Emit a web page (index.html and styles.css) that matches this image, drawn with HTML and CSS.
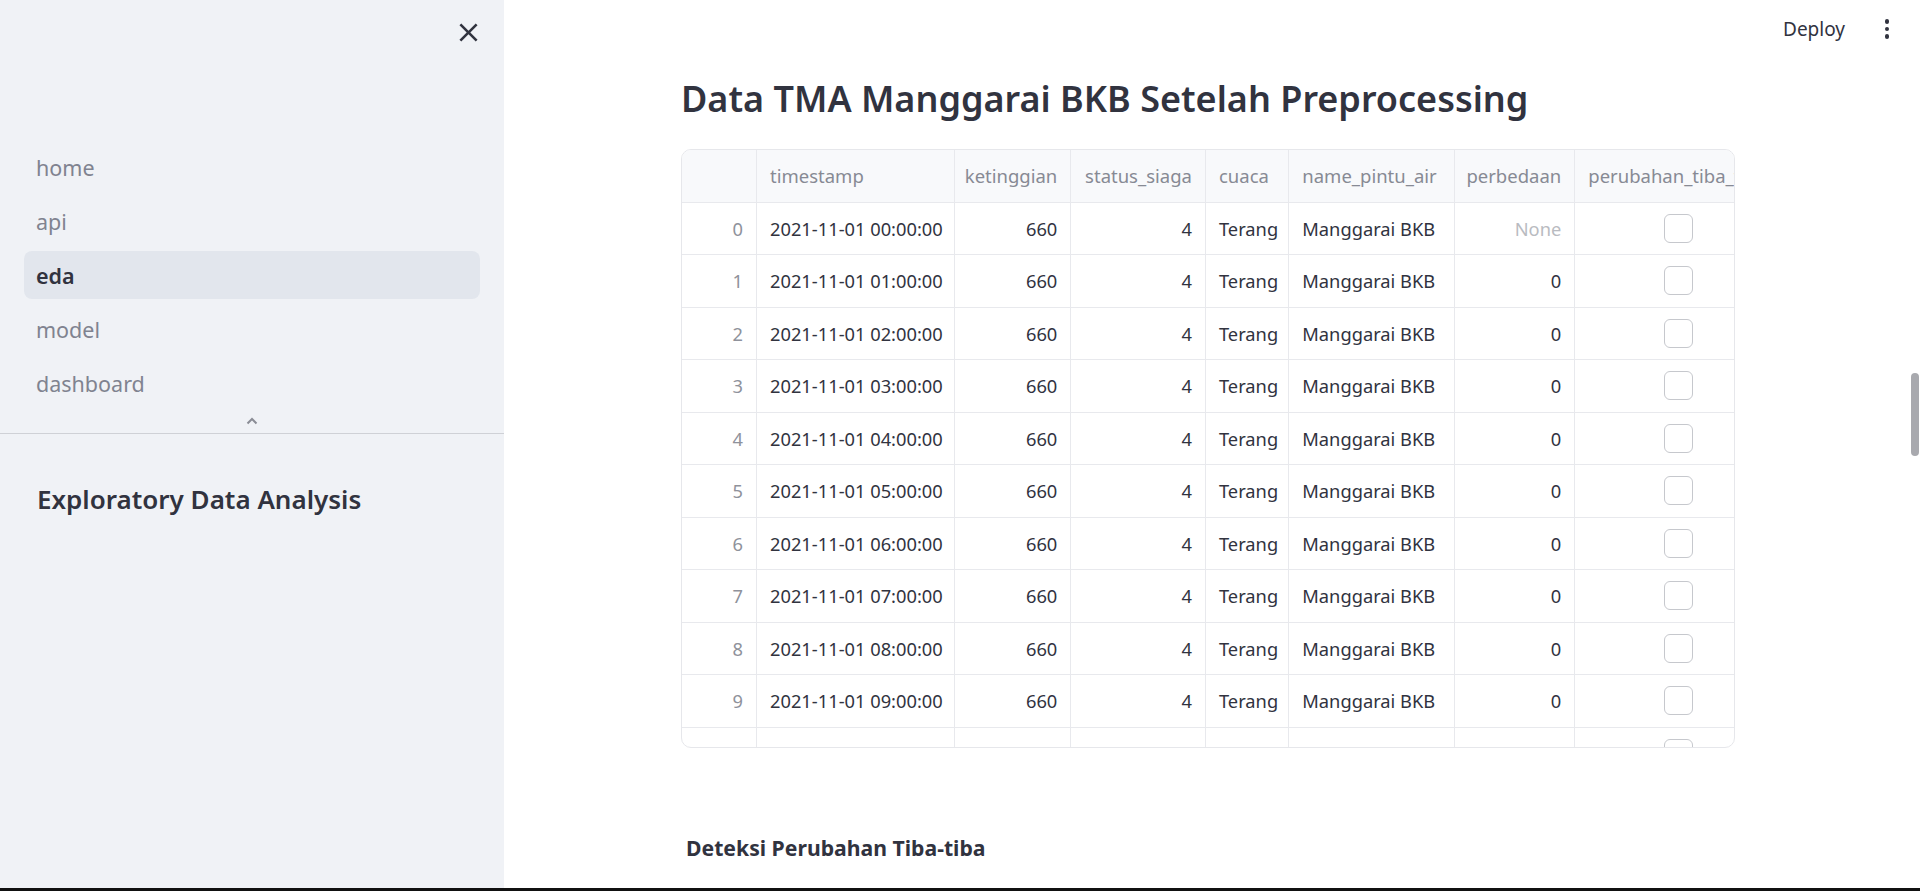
FILE: index.html
```html
<!DOCTYPE html>
<html lang="id">
<head>
<meta charset="utf-8">
<title>eda</title>
<link rel="stylesheet" href="styles.css">
</head>
<body>
<div class="app">
  <aside class="sidebar">
    <div class="sb-top">
      <button class="close-btn" aria-label="Close sidebar">
        <svg width="31" height="31" viewBox="0 0 24 24"><path d="M19 6.41L17.59 5 12 10.59 6.41 5 5 6.41 10.59 12 5 17.59 6.41 19 12 13.41 17.59 19 19 17.59 13.41 12z" fill="#31333f"/></svg>
      </button>
    </div>
    <nav class="nav">
      <a class="nav-item">home</a>
      <a class="nav-item">api</a>
      <a class="nav-item active">eda</a>
      <a class="nav-item">model</a>
      <a class="nav-item">dashboard</a>
    </nav>
    <div class="nav-toggle">
      <svg width="12" height="8" viewBox="0 0 12 8"><path d="M1.5 6.5L6 2l4.5 4.5" fill="none" stroke="#8b8d96" stroke-width="2"/></svg>
    </div>
    <div class="sb-divider"></div>
    <div class="sb-content">
      <h2 class="sb-heading">Exploratory Data Analysis</h2>
    </div>
  </aside>
  <main class="main">
    <header class="topbar">
      <span class="deploy">Deploy</span>
      <span class="kebab"><i></i><i></i><i></i></span>
    </header>
    <section class="content">
      <h1 class="title">Data TMA Manggarai BKB Setelah Preprocessing</h1>
      <div class="table-wrap">
        <div class="grid">
          <div class="c h"></div><div class="c h">timestamp</div><div class="c h r">ketinggian</div><div class="c h r">status_siaga</div><div class="c h">cuaca</div><div class="c h">name_pintu_air</div><div class="c h r">perbedaan</div><div class="c h">perubahan_tiba_tiba</div>

          <div class="c idx">0</div><div class="c">2021-11-01 00:00:00</div><div class="c r">660</div><div class="c r">4</div><div class="c">Terang</div><div class="c">Manggarai BKB</div><div class="c r none">None</div><div class="c cb"><span class="box"></span></div>
          <div class="c idx">1</div><div class="c">2021-11-01 01:00:00</div><div class="c r">660</div><div class="c r">4</div><div class="c">Terang</div><div class="c">Manggarai BKB</div><div class="c r">0</div><div class="c cb"><span class="box"></span></div>
          <div class="c idx">2</div><div class="c">2021-11-01 02:00:00</div><div class="c r">660</div><div class="c r">4</div><div class="c">Terang</div><div class="c">Manggarai BKB</div><div class="c r">0</div><div class="c cb"><span class="box"></span></div>
          <div class="c idx">3</div><div class="c">2021-11-01 03:00:00</div><div class="c r">660</div><div class="c r">4</div><div class="c">Terang</div><div class="c">Manggarai BKB</div><div class="c r">0</div><div class="c cb"><span class="box"></span></div>
          <div class="c idx">4</div><div class="c">2021-11-01 04:00:00</div><div class="c r">660</div><div class="c r">4</div><div class="c">Terang</div><div class="c">Manggarai BKB</div><div class="c r">0</div><div class="c cb"><span class="box"></span></div>
          <div class="c idx">5</div><div class="c">2021-11-01 05:00:00</div><div class="c r">660</div><div class="c r">4</div><div class="c">Terang</div><div class="c">Manggarai BKB</div><div class="c r">0</div><div class="c cb"><span class="box"></span></div>
          <div class="c idx">6</div><div class="c">2021-11-01 06:00:00</div><div class="c r">660</div><div class="c r">4</div><div class="c">Terang</div><div class="c">Manggarai BKB</div><div class="c r">0</div><div class="c cb"><span class="box"></span></div>
          <div class="c idx">7</div><div class="c">2021-11-01 07:00:00</div><div class="c r">660</div><div class="c r">4</div><div class="c">Terang</div><div class="c">Manggarai BKB</div><div class="c r">0</div><div class="c cb"><span class="box"></span></div>
          <div class="c idx">8</div><div class="c">2021-11-01 08:00:00</div><div class="c r">660</div><div class="c r">4</div><div class="c">Terang</div><div class="c">Manggarai BKB</div><div class="c r">0</div><div class="c cb"><span class="box"></span></div>
          <div class="c idx">9</div><div class="c">2021-11-01 09:00:00</div><div class="c r">660</div><div class="c r">4</div><div class="c">Terang</div><div class="c">Manggarai BKB</div><div class="c r">0</div><div class="c cb"><span class="box"></span></div>
          <div class="c idx">10</div><div class="c">2021-11-01 10:00:00</div><div class="c r">660</div><div class="c r">4</div><div class="c">Terang</div><div class="c">Manggarai BKB</div><div class="c r">0</div><div class="c cb"><span class="box"></span></div>
        </div>
      </div>
      <h4 class="subhead">Deteksi Perubahan Tiba-tiba</h4>
    </section>
    <div class="scrollbar"></div>
  </main>
</div>
<div class="bottom-strip"></div>
</body>
</html>
```
FILE: styles.css
```css
* { box-sizing: border-box; }

html, body {
  margin: 0;
  height: 100%;
}

body {
  display: flex;
  flex-direction: column;
  overflow: hidden;
  font-family: "Noto Sans", "Open Sans", sans-serif;
  font-stretch: semi-condensed;
  color: #31333f;
  background: #ffffff;
}

.app {
  flex: 1;
  display: flex;
  min-height: 0;
}

.bottom-strip {
  height: 3px;
  background: #111111;
}

/* Sidebar */
.sidebar {
  width: 504px;
  flex: none;
  background: #f0f2f6;
  display: flex;
  flex-direction: column;
}

.sb-top {
  height: 64px;
  display: flex;
  align-items: center;
  justify-content: flex-end;
  padding-right: 20px;
}

.close-btn {
  border: 0;
  background: none;
  padding: 0;
  width: 31px;
  height: 31px;
  display: flex;
}

.nav {
  margin-top: 79px;
  padding: 0 24px;
  display: flex;
  flex-direction: column;
  gap: 6px;
}

.nav-item {
  height: 48px;
  display: flex;
  align-items: center;
  padding-left: 12px;
  border-radius: 8px;
  font-size: 21.5px;
  color: #808390;
}

.nav-item.active {
  background: #e2e6ed;
  color: #31333f;
  font-weight: 600;
}

.nav-toggle {
  height: 26px;
  display: flex;
  align-items: center;
  justify-content: center;
  padding-top: 2px;
}

.sb-divider {
  height: 1px;
  background: #cfd1d6;
}

.sb-content {
  padding: 50px 0 0 37px;
}

.sb-heading {
  margin: 0;
  font-size: 26px;
  line-height: 1.2;
  font-weight: 600;
  color: #31333f;
}

/* Main */
.main {
  flex: 1;
  position: relative;
  min-width: 0;
  background: #ffffff;
}

.topbar {
  height: 58px;
  display: flex;
  align-items: center;
  justify-content: flex-end;
  padding-right: 13px;
  gap: 22px;
}

.deploy {
  font-size: 19px;
  color: #31333f;
}

.kebab {
  width: 40px;
  height: 40px;
  display: flex;
  flex-direction: column;
  align-items: center;
  justify-content: center;
  gap: 2.7px;
}

.kebab i {
  width: 4.6px;
  height: 4.6px;
  border-radius: 50%;
  background: #31333f;
}

.content {
  padding-left: 177px;
  width: 1231px;
}

.title {
  margin: 19px 0 0;
  font-size: 36px;
  line-height: 1.2;
  font-weight: 600;
  color: #31333f;
}

.table-wrap {
  margin-top: 29px;
  height: 599px;
  border: 1px solid #e6e7eb;
  border-radius: 10px;
  overflow: hidden;
}

.grid {
  display: grid;
  grid-template-columns: 75px 198px 116.3px 134.7px 83.3px 165.3px 120.7px 208px;
  grid-auto-rows: 52.5px;
}

.c {
  display: flex;
  align-items: center;
  padding: 0 13px;
  border-right: 1px solid #e8e9ed;
  border-bottom: 1px solid #e8e9ed;
  font-size: 18.3px;
  white-space: nowrap;
  overflow: hidden;
  color: #31333f;
}

.c.h {
  background: #f8f9fb;
  color: #878a94;
  font-size: 18.5px;
}

.c.r { justify-content: flex-end; }

.c.idx {
  justify-content: flex-end;
  color: #8f929b;
}

.c.none { color: #b9bbc1; }

.c.cb { justify-content: center; }

.box {
  width: 29px;
  height: 29px;
  border: 1.5px solid #c6c8cd;
  border-radius: 6px;
  background: #ffffff;
}

.subhead {
  margin: 87px 0 0 5px;
  font-size: 21.2px;
  line-height: 1.2;
  font-weight: 700;
  color: #31333f;
}

.scrollbar {
  position: absolute;
  right: 1px;
  top: 373px;
  width: 8px;
  height: 83px;
  border-radius: 4px;
  background: #a8a9ae;
}
```
